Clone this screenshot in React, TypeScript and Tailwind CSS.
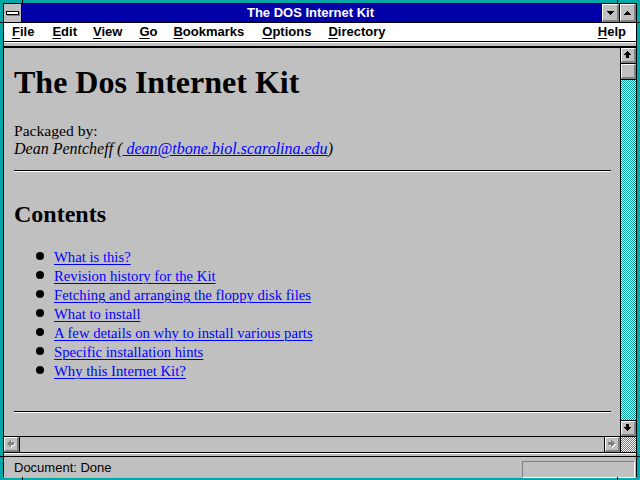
import React from "react";

const SERIF = "font-['Liberation_Serif','Times_New_Roman',serif]";
const SANS = "font-['Liberation_Sans',Arial,sans-serif]";

type Dir = "up" | "down" | "left" | "right";

// pixel-art arrows: [x, y, w, h] rects
const ARROWS: Record<Dir, [number, number, number, number][]> = {
  up: [
    [3, 0, 1, 1],
    [2, 1, 3, 1],
    [1, 2, 5, 1],
    [0, 3, 7, 1],
    [2, 4, 3, 3],
  ],
  down: [
    [2, 0, 3, 3],
    [0, 3, 7, 1],
    [1, 4, 5, 1],
    [2, 5, 3, 1],
    [3, 6, 1, 1],
  ],
  left: [
    [0, 3, 1, 1],
    [1, 2, 1, 3],
    [2, 1, 1, 5],
    [3, 0, 1, 7],
    [4, 2, 3, 3],
  ],
  right: [
    [0, 2, 3, 3],
    [3, 0, 1, 7],
    [4, 1, 1, 5],
    [5, 2, 1, 3],
    [6, 3, 1, 1],
  ],
};

function Arrow({ dir, disabled }: { dir: Dir; disabled?: boolean }) {
  const rects = ARROWS[dir];
  return (
    <svg width="8" height="8" viewBox="0 0 8 8" shapeRendering="crispEdges">
      {disabled &&
        rects.map(([x, y, w, h], i) => (
          <rect key={"s" + i} x={x + 1} y={y + 1} width={w} height={h} fill="#ffffff" />
        ))}
      {rects.map(([x, y, w, h], i) => (
        <rect key={i} x={x} y={y} width={w} height={h} fill={disabled ? "#808080" : "#000000"} />
      ))}
    </svg>
  );
}

function Tri({ up }: { up?: boolean }) {
  return (
    <svg width="7" height="4" viewBox="0 0 7 4" shapeRendering="crispEdges">
      {[0, 1, 2, 3].map((r) => {
        const row = up ? 3 - r : r;
        return <rect key={r} x={row} y={r} width={7 - row * 2} height={1} fill="#000" />;
      })}
    </svg>
  );
}

function Bevel({ className = "", children }: { className?: string; children?: React.ReactNode }) {
  return (
    <div
      className={`flex items-center justify-center bg-[#c0c0c0] border-t border-l border-t-white border-l-white border-b-2 border-r-2 border-b-[#808080] border-r-[#808080] ${className}`}
    >
      {children}
    </div>
  );
}

const dither =
  "bg-[image:repeating-conic-gradient(#00a8a8_0%_25%,#ffffff_0%_50%)] bg-[length:2px_2px]";

const menus = [
  { label: "File", ml: "ml-[8px]" },
  { label: "Edit", ml: "ml-[18px]" },
  { label: "View", ml: "ml-[16px]" },
  { label: "Go", ml: "ml-[17px]" },
  { label: "Bookmarks", ml: "ml-[16px]" },
  { label: "Options", ml: "ml-[18px]" },
  { label: "Directory", ml: "ml-[17px]" },
];

const contents = [
  "What is this?",
  "Revision history for the Kit",
  "Fetching and arranging the floppy disk files",
  "What to install",
  "A few details on why to install various parts",
  "Specific installation hints",
  "Why this Internet Kit?",
];

export default function App() {
  return (
    <div className={`relative w-[640px] h-[480px] bg-[#00a8a8] p-[3px] ${SANS}`}>
      {/* sizing border corner ticks */}
      <div className="absolute left-[22px] top-0 w-px h-[3px] bg-black" />
      <div className="absolute left-[617px] top-0 w-px h-[3px] bg-black" />
      <div className="absolute left-[22px] bottom-0 w-px h-[3px] bg-black" />
      <div className="absolute left-[617px] bottom-0 w-px h-[3px] bg-black" />
      <div className="absolute left-0 top-[22px] w-[3px] h-px bg-black" />
      <div className="absolute right-0 top-[22px] w-[3px] h-px bg-black" />
      <div className="absolute left-0 top-[456px] w-[3px] h-px bg-black" />
      <div className="absolute right-0 top-[456px] w-[3px] h-px bg-black" />

      <div className="w-full h-full border border-black flex flex-col bg-[#c0c0c0]">
        {/* title bar */}
        <div className="flex h-[18px] shrink-0">
          <div className="w-[18px] bg-[#c0c0c0] border-r border-black flex items-center justify-center">
            <div className="w-[13px] h-[4px] bg-white border border-black shadow-[1px_1px_0_#808080] mb-[1px]" />
          </div>
          <div className="flex-1 bg-[#0000a8] flex items-center justify-center text-white font-bold text-[13px] leading-none pb-[1px] pr-[2px]">
            The DOS Internet Kit
          </div>
          <div className="border-l border-black flex">
            <Bevel className="w-[17px] h-[18px]">
              <Tri />
            </Bevel>
          </div>
          <div className="border-l border-black flex">
            <Bevel className="w-[16px] h-[18px]">
              <Tri up />
            </Bevel>
          </div>
        </div>

        {/* menu bar */}
        <div className="flex items-center h-[20px] shrink-0 bg-white border-t border-b border-black text-[13px] font-bold text-black">
          {menus.map((m) => (
            <span key={m.label} className={m.ml}>
              <span className="underline decoration-1 underline-offset-[2px]">{m.label[0]}</span>
              {m.label.slice(1)}
            </span>
          ))}
          <span className="ml-auto mr-[10px]">
            <span className="underline decoration-1 underline-offset-[2px]">H</span>elp
          </span>
        </div>

        {/* toolbar strip */}
        <div className="h-[6px] shrink-0 bg-[#c0c0c0] border-t border-white border-b-2 border-b-black" />

        {/* content + vertical scrollbar */}
        <div className="flex h-[388px] shrink-0">
          <div className={`flex-1 overflow-hidden bg-[#c0c0c0] pl-[10px] pr-[9px] text-black ${SERIF}`}>
            <h1 className="mt-[16px] text-[32px] leading-[36px] font-bold">The Dos Internet Kit</h1>
            <div className="mt-[22px] text-[15.6px] leading-[18px]">
              <div>Packaged by:</div>
              <div className="italic text-[16px]">
                Dean Pentcheff (
                <a className="text-[#0000ff] underline decoration-1">{" dean@tbone.biol.scarolina.edu"}</a>)
              </div>
            </div>
            <div className="mt-[12px] border-t border-black border-b border-b-white" />
            <h2 className="mt-[28px] text-[24px] leading-[28px] font-bold">Contents</h2>
            <ul className="mt-[20px] text-[14.7px] leading-[19px]">
              {contents.map((c) => (
                <li key={c} className="flex items-start">
                  <span className="ml-[22px] mr-[10px] mt-[4px] w-[8px] h-[8px] rounded-full bg-black shrink-0" />
                  <a className="text-[#0000ff] underline decoration-1 underline-offset-[2px]">{c}</a>
                </li>
              ))}
            </ul>
            <div className="mt-[30px] border-t border-black border-b border-b-white" />
          </div>
          <div className="w-[16px] border-l border-black flex flex-col">
            <Bevel className="h-[15px] shrink-0">
              <Arrow dir="up" />
            </Bevel>
            <div className="border-t border-black" />
            <Bevel className="h-[15px] shrink-0" />
            <div className="border-t border-black" />
            <div className={`flex-1 ${dither}`} />
            <div className="border-t border-black" />
            <Bevel className="h-[15px] shrink-0">
              <Arrow dir="down" />
            </Bevel>
          </div>
        </div>

        {/* horizontal scrollbar */}
        <div className="flex h-[17px] shrink-0 border-t border-b border-black">
          <Bevel className="w-[15px]">
            <Arrow dir="left" disabled />
          </Bevel>
          <div className="flex-1 border-l border-r border-black bg-[#c0c0c0]" />
          <Bevel className="w-[15px]">
            <Arrow dir="right" disabled />
          </Bevel>
          <div className={`w-[16px] border-l border-black ${dither}`} />
        </div>

        {/* separator */}
        <div className="h-[4px] shrink-0 bg-[#c0c0c0] border-t border-white border-b border-b-black" />

        {/* status bar */}
        <div className="flex-1 flex items-center bg-[#c0c0c0] text-[13px] text-black">
          <span className="ml-[10px] pt-[1px]">Document: Done</span>
          <div className="ml-auto mr-[1px] self-end w-[113px] h-[17px] border-t border-l border-[#808080] border-b border-r border-b-white border-r-white" />
        </div>
      </div>
    </div>
  );
}
